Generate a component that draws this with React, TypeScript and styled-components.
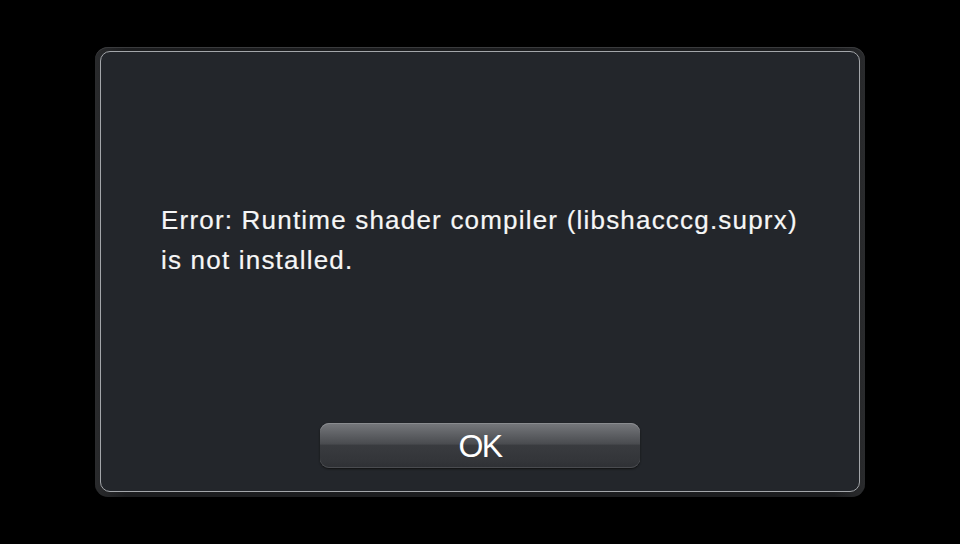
import styled, { createGlobalStyle } from "styled-components";

const Global = createGlobalStyle`
    html, body {
        margin: 0;
        padding: 0;
        background: #000;
    }
    body {
        width: 960px;
        height: 544px;
        overflow: hidden;
        font-family: "Liberation Sans", Arial, sans-serif;
    }
`

const Screen = styled.div`
    width: 960px;
    height: 544px;
    display: flex;
    align-items: flex-start;
    padding: 47px 0 0 95px;
    box-sizing: border-box;
`

const Frame = styled.div`
    width: 770px;
    height: 450px;
    box-sizing: border-box;
    padding: 4px 5px 5px 5px;
    border-radius: 13px;
    background: linear-gradient(90deg, #2a2b2d, #1c1d1f 4%, #1c1d1f 96%, #2a2b2d);
    box-shadow: inset 0 1px 0 #3a3b3d;
`

const Panel = styled.div`
    height: 100%;
    box-sizing: border-box;
    border: 1px solid #a3a6aa;
    border-radius: 10px;
    background: #23262b;
    display: flex;
    flex-direction: column;
    padding: 148px 0 23px 60px;
`

const Message = styled.p`
    margin: 0;
    color: #f6f6f6;
    font-size: 26px;
    line-height: 40px;
    letter-spacing: 1.2px;
    -webkit-text-stroke: 0.2px #f6f6f6;
`

const Button = styled.button`
    margin-top: auto;
    align-self: center;
    margin-left: -60px;
    width: 320px;
    height: 45px;
    border: none;
    border-radius: 9px;
    color: #fff;
    font-family: inherit;
    font-size: 32px;
    letter-spacing: -1.5px;
    padding: 1px 0 0;
    background: linear-gradient(#77797d 0%, #636569 20%, #4a4c50 46%, #393b3f 50%, #333539 85%, #2e3034 100%);
    box-shadow: inset 0 1px 0 #8a8c90, inset 0 -1px 0 #4a4c50, 0 1px 2px #111;
`

export default function App() {
    return <>
        <Global />
        <Screen>
            <Frame>
                <Panel>
                    <Message>
                        Error: Runtime shader compiler (libshacccg.suprx)<br />
                        is not installed.
                    </Message>
                    <Button>OK</Button>
                </Panel>
            </Frame>
        </Screen>
    </>
}
